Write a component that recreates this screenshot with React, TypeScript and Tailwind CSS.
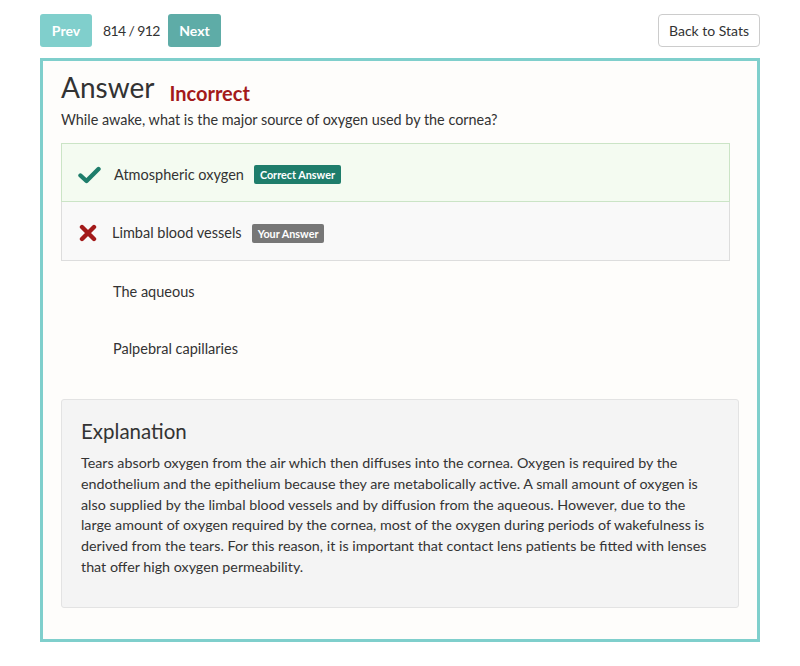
import React from "react";

function Check() {
  return (
    <svg width="23" height="18" viewBox="0 0 23 18">
      <path d="M2.5 9.5 L8.5 15 L20.5 3" fill="none" stroke="#1e7d6b" strokeWidth="4.4" strokeLinecap="round" strokeLinejoin="round" />
    </svg>
  );
}

function Cross() {
  return (
    <svg width="18" height="18" viewBox="0 0 18 18">
      <path d="M3 3 L15 15 M15 3 L3 15" fill="none" stroke="#a31a1a" strokeWidth="4.4" strokeLinecap="round" />
    </svg>
  );
}

export default function App() {
  const font = { fontFamily: "Lato, 'Open Sans', sans-serif" };
  return (
    <div className="w-[800px] h-[666px] bg-white text-[#333]" style={font}>
      <div className="flex items-center justify-between pl-[40px] pr-[40px] pt-[14px]">
        <div className="flex items-center">
          <button className="h-[33px] w-[52px] rounded-[3px] bg-[#80cfcc] text-white font-bold text-[14px]">Prev</button>
          <span className="w-[76px] pl-[11px] text-[14px] tracking-[-0.6px] text-[#333]">814 / 912</span>
          <button className="h-[33px] w-[53px] rounded-[3px] bg-[#5eaca7] text-white font-bold text-[14px]">Next</button>
        </div>
        <button className="h-[33px] w-[102px] rounded-[4px] border border-[#cccccc] bg-white text-[14px] text-[#333]">Back to Stats</button>
      </div>
      <div className="mx-[40px] mt-[11px] h-[584px] border-[3px] border-[#7fcfcc] bg-[#fefdfb] pl-[18px] pr-[18px]">
        <div className="flex items-end pt-[9px]">
          <h1 className="text-[28px] leading-[34px] text-[#333]">Answer</h1>
          <span className="ml-[15px] mb-[-3px] text-[20px] font-bold text-[#a31a1a] leading-[28px]">Incorrect</span>
        </div>
        <p className="mt-[6px] text-[14.4px] leading-[20px]">While awake, what is the major source of oxygen used by the cornea?</p>
        <div className="mt-[13px] w-[669px]">
          <div className="flex h-[59px] items-center border border-[#cbe4c6] bg-[#f4fbf1] pl-[16px] pt-[4px]">
            <Check />
            <span className="ml-[13px] text-[14.5px]">Atmospheric oxygen</span>
            <span className="ml-[10px] rounded-[2px] bg-[#1e7d6b] px-[6px] py-[2px] text-[10.8px] font-bold leading-[15px] text-white">Correct Answer</span>
          </div>
          <div className="flex h-[59px] items-center border border-t-0 border-[#dddddd] bg-[#f9f9f9] pl-[17px] pt-[4px]">
            <Cross />
            <span className="ml-[15px] text-[14.5px]">Limbal blood vessels</span>
            <span className="ml-[10px] rounded-[2px] bg-[#777777] px-[6px] py-[2px] text-[10.8px] font-bold leading-[15px] text-white">Your Answer</span>
          </div>
          <div className="flex h-[58px] items-center pl-[52px] pt-[3px]">
            <span className="text-[14.5px]">The aqueous</span>
          </div>
          <div className="flex h-[57px] items-center pl-[52px] pt-[3px]">
            <span className="text-[14.5px]">Palpebral capillaries</span>
          </div>
        </div>
        <div className="mt-[23px] w-[678px] h-[209px] rounded-[3px] border border-[#e3e3e3] bg-[#f4f4f4] px-[19px] pt-[17px]">
          <h2 className="text-[20.5px] leading-[28px] text-[#333]">Explanation</h2>
          <p className="mt-[8px] text-[14.3px] leading-[20.8px] text-[#333]">
            Tears absorb oxygen from the air which then diffuses into the cornea. Oxygen is required by the endothelium and the epithelium because they are metabolically active. A small amount of oxygen is also supplied by the limbal blood vessels and by diffusion from the aqueous. However, due to the large amount of oxygen required by the cornea, most of the oxygen during periods of wakefulness is derived from the tears. For this reason, it is important that contact lens patients be fitted with lenses that offer high oxygen permeability.
          </p>
        </div>
      </div>
    </div>
  );
}
